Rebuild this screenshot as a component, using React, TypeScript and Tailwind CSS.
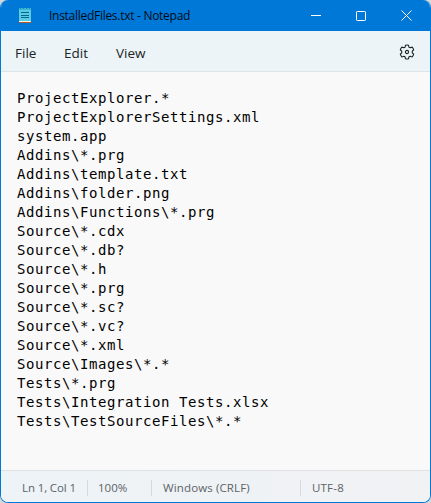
import React from "react";

const lines: string[] = [
  "ProjectExplorer.*",
  "ProjectExplorerSettings.xml",
  "system.app",
  "Addins\\*.prg",
  "Addins\\template.txt",
  "Addins\\folder.png",
  "Addins\\Functions\\*.prg",
  "Source\\*.cdx",
  "Source\\*.db?",
  "Source\\*.h",
  "Source\\*.prg",
  "Source\\*.sc?",
  "Source\\*.vc?",
  "Source\\*.xml",
  "Source\\Images\\*.*",
  "Tests\\*.prg",
  "Tests\\Integration Tests.xlsx",
  "Tests\\TestSourceFiles\\*.*",
];

function NotepadIcon() {
  return (
    <svg width="13" height="17" viewBox="0 0 13 17" className="shrink-0">
      <path d="M0 15h12.500v.5l-1 .5H0z" fill="#a95b2b" />
      <path d="M0 14h12v.7L11 15H0z" fill="#fff4e8" />
      <path d="M0 1h12v13H0z" fill="#5bcbe2" />
      <path d="M0 1h12v2H0z" fill="#3fb6d2" />
      <path d="M1.500 1v1M4.500 1v1M7.500 1v1M10.500 1v1" stroke="#1590b8" />
      <path d="M2 5.500h8M2 8.500h8M2 10.500h8" stroke="#00688f" />
    </svg>
  );
}

function TitleBar() {
  return (
    <header className="flex h-[31px] shrink-0 items-center bg-[#0078d7] pl-[18px] text-white">
      <NotepadIcon />
      <span className="ml-[17px] mt-px whitespace-nowrap text-[12px] leading-4 tracking-[-0.28px] text-[#020c18]">
        InstalledFiles.txt - Notepad
      </span>
      <div className="ml-auto flex">
        <button className="flex h-[31px] w-[45px] items-center justify-center" aria-label="Minimize">
          <svg width="10" height="11" stroke="white"><path d="M0 5.5h10" /></svg>
        </button>
        <button className="flex h-[31px] w-[45px] items-center justify-center" aria-label="Maximize">
          <svg width="10" height="10" fill="none" stroke="white"><rect x=".5" y=".5" width="9" height="9" rx=".7" /></svg>
        </button>
        <button className="flex h-[31px] w-[47px] items-center justify-center" aria-label="Close">
          <svg width="11" height="11" stroke="white"><path d="M.5.5l10 10M10.5.5l-10 10" /></svg>
        </button>
      </div>
    </header>
  );
}

function SettingsIcon() {
  return (
    <svg width="16" height="16" viewBox="0 0 16 16" fill="none" stroke="#202425" strokeWidth="1.1" strokeLinejoin="round">
      <path d="M6.5 1.2Q8 .8 9.5 1.2l.4 1.9q.9.8 2 .4l1.3-.4q1.1 1.2 1.5 2.7l-1.3 1.2q-.5 1 0 2l1.3 1.2q-.4 1.5-1.5 2.7l-1.300-.4q-1.100-.4-2 .4l-.4 1.900q-1.500.4-3 0l-.4-1.900q-.9-.8-2-.4l-1.300.4Q1.700 11.700 1.300 10.200L2.600 9q.5-1 0-2L1.300 5.800Q1.700 4.300 2.800 3.100l1.300.4q1.100.4 2-.4z" />
      <circle cx="8" cy="8" r="1.6" />
    </svg>
  );
}

export default function App() {
  return (
    <div className="h-[503px] w-[431px] bg-[#d3d8db] font-['Open_Sans','Noto_Sans',sans-serif]">
      <div className="flex h-[503px] w-[431px] flex-col overflow-hidden rounded-[8px] border border-t-0 border-[#0078d7] bg-[#f9f9f9]">
        <TitleBar />
        <nav className="flex h-[41px] shrink-0 items-center border-b border-[#dce5e8] bg-[#ecf4f7] pl-[14px] pr-[15px] pt-[4px] text-[13.5px] text-[#202425]">
          <span className="w-[49px]">File</span>
          <span className="w-[52px]">Edit</span>
          <span>View</span>
          <button className="mb-[3px] ml-auto" aria-label="Settings"><SettingsIcon /></button>
        </nav>
        <main className="min-h-0 flex-1 pl-4 pt-[17px]">
          <pre className="font-['DejaVu_Sans_Mono',monospace] text-[14px] leading-[19px] tracking-[0.572px] text-black">{lines.join("\n")}</pre>
        </main>
        <footer className="flex h-8 shrink-0 items-center border-t border-[#dfe1e2] bg-linear-to-r from-[#edf3f7] to-[#f1f2f4] pl-[21px] pt-[3px] text-[11.5px] leading-4 text-[#5d6265]">
          <span className="w-[65px] whitespace-nowrap tracking-[-0.12px]">Ln 1, Col 1</span>
          <span className="w-[64px] border-l border-[#d6dadd] pl-[10px]">100%</span>
          <span className="w-[149px] whitespace-nowrap border-l border-[#d6dadd] pl-[11px] tracking-[0.13px]">Windows (CRLF)</span>
          <span className="border-l border-[#d6dadd] pl-[11px] tracking-[0.2px]">UTF-8</span>
        </footer>
      </div>
    </div>
  );
}
